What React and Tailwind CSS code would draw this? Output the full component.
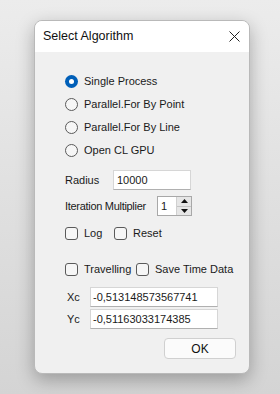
import React from "react";

const font = { fontFamily: '"Liberation Sans", Arial, sans-serif' };

const Radio = ({ checked, label }) => (
  <div className="flex items-center h-[23px]">
    {checked ? (
      <span className="w-[13px] h-[13px] shrink-0 rounded-full bg-[#005fb8] flex items-center justify-center">
        <span className="w-[5px] h-[5px] rounded-full bg-white" />
      </span>
    ) : (
      <span className="w-[13px] h-[13px] shrink-0 rounded-full border border-[#5a5a5a] bg-[#f6f6f6]" />
    )}
    <span className="ml-[6px] text-[11px] text-[#1a1a1a]">{label}</span>
  </div>
);

const Check = ({ label, className = "" }) => (
  <div className={`flex items-center shrink-0 ${className}`}>
    <span className="w-[13px] h-[13px] shrink-0 rounded-[3px] border border-[#5a5a5a] bg-[#f6f6f6]" />
    <span className="ml-[6px] text-[11px] text-[#1a1a1a] whitespace-nowrap">{label}</span>
  </div>
);

const TextBox = ({ value, className = "" }) => (
  <div
    className={`h-[20px] shrink-0 bg-white border border-[#d6d6d6] border-b-[#b0b0b0] flex items-center px-[2px] text-[11px] text-[#1a1a1a] ${className}`}
  >
    {value}
  </div>
);

export default function App() {
  return (
    <div
      className="w-[280px] h-[394px] bg-gradient-to-b from-[#ececec] to-[#d4d4d4] overflow-hidden pt-[20px] pl-[34px]"
      style={font}
    >
      <div className="w-[216px] h-[354px] rounded-[8px] bg-[#f0f0f0] border border-[#b9b9b9] shadow-[0_6px_18px_rgba(0,0,0,0.28)] overflow-hidden flex flex-col">
        <div className="h-[31px] bg-white flex items-center justify-between pl-[8px] pr-[9px]">
          <span className="text-[12.5px] text-[#111]">Select Algorithm</span>
          <svg width="11" height="11" viewBox="0 0 11 11" className="text-[#222]">
            <path d="M0.5 0.5L10.5 10.5M10.5 0.5L0.5 10.5" stroke="currentColor" strokeWidth="1" />
          </svg>
        </div>

        <div className="flex flex-col pl-[30px] pt-[18px]">
          <Radio checked label="Single Process" />
          <Radio label="Parallel.For By Point" />
          <Radio label="Parallel.For By Line" />
          <Radio label="Open CL GPU" />

          <div className="flex items-center mt-[8px] h-[20px]">
            <span className="w-[48px] shrink-0 text-[11px] text-[#1a1a1a]">Radius</span>
            <TextBox value="10000" className="w-[78px] pl-[3px]" />
          </div>

          <div className="flex items-center mt-[6px] h-[20px]">
            <span className="w-[92px] shrink-0 whitespace-nowrap text-[11px] text-[#1a1a1a] tracking-[-0.3px]">Iteration Multiplier</span>
            <div className="w-[35px] h-[20px] shrink-0 bg-white border border-[#a8a8a8] flex">
              <span className="flex-1 text-[11px] text-[#1a1a1a] pl-[3px] leading-[18px]">1</span>
              <div className="w-[15px] flex flex-col border-l border-[#d0d0d0]">
                <div className="flex-1 bg-[#e6e6e6] flex items-center justify-center border-b border-[#c4c4c4]">
                  <svg width="7" height="4" viewBox="0 0 7 4"><path d="M3.5 0L7 4H0z" fill="#111" /></svg>
                </div>
                <div className="flex-1 bg-[#e6e6e6] flex items-center justify-center">
                  <svg width="7" height="4" viewBox="0 0 7 4"><path d="M0 0H7L3.5 4z" fill="#111" /></svg>
                </div>
              </div>
            </div>
          </div>

          <div className="flex items-center mt-[8px] h-[18px]">
            <Check label="Log" className="w-[49px]" />
            <Check label="Reset" />
          </div>

          <div className="flex items-center mt-[18px] h-[18px]">
            <Check label="Travelling" className="w-[71px]" />
            <Check label="Save Time Data" />
          </div>

          <div className="flex items-center mt-[9px] h-[20px]">
            <span className="w-[25px] shrink-0 pl-[2px] text-[11px] text-[#1a1a1a]">Xc</span>
            <TextBox value="-0,513148573567741" className="w-[128px]" />
          </div>
          <div className="flex items-center mt-[2px] h-[20px]">
            <span className="w-[25px] shrink-0 pl-[2px] text-[11px] text-[#1a1a1a]">Yc</span>
            <TextBox value="-0,51163033174385" className="w-[128px]" />
          </div>

          <div className="flex justify-end mt-[9px] pr-[13px]">
            <button className="w-[72px] h-[21px] rounded-[4px] bg-[#fbfbfb] border border-[#d0d0d0] text-[12px] text-[#111]">
              OK
            </button>
          </div>
        </div>
      </div>
    </div>
  );
}
